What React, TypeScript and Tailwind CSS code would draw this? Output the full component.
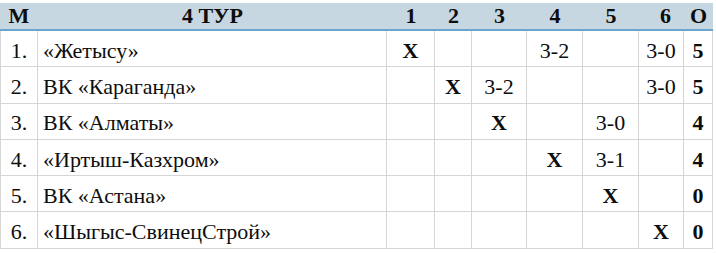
import React from "react";

const rows: { n: string; name: string; cells: string[]; o: string }[] = [
  { n: "1.", name: "«Жетысу»", cells: ["X", "", "", "3-2", "", "3-0"], o: "5" },
  { n: "2.", name: "ВК «Караганда»", cells: ["", "X", "3-2", "", "", "3-0"], o: "5" },
  { n: "3.", name: "ВК «Алматы»", cells: ["", "", "X", "", "3-0", ""], o: "4" },
  { n: "4.", name: "«Иртыш-Казхром»", cells: ["", "", "", "X", "3-1", ""], o: "4" },
  { n: "5.", name: "ВК «Астана»", cells: ["", "", "", "", "X", ""], o: "0" },
  { n: "6.", name: "«Шыгыс-СвинецСтрой»", cells: ["", "", "", "", "", "X"], o: "0" },
];

const grid = "grid grid-cols-[38px_349px_48px_37px_55px_56px_56px_45px_29px]";
const cell = "flex items-center justify-center pt-[4px] border-r border-b border-[#d6d6d6] h-[36.3px]";

export default function App() {
  return (
    <div className="bg-white w-[716px] h-[253px] pt-[3px] text-[#0d0d0d] font-['Liberation_Serif'] text-[22px] leading-none">
      <div className={grid + " bg-[#c6d7e1] h-[28px] border-b-2 border-[#6ea3cf] w-[713px] font-bold"}>
        <div className="flex items-center justify-center">М</div>
        <div className="flex items-center justify-center">4 ТУР</div>
        <div className="flex items-center justify-center">1</div>
        <div className="flex items-center justify-center">2</div>
        <div className="flex items-center justify-center">3</div>
        <div className="flex items-center justify-center">4</div>
        <div className="flex items-center justify-center">5</div>
        <div className="flex items-center justify-center pl-[8px]">6</div>
        <div className="flex items-center justify-center">О</div>
      </div>
      {rows.map((r) => (
        <div key={r.n} className={grid + " w-[713px]"}>
          <div className={cell + " border-l"}>{r.n}</div>
          <div className="flex items-center justify-start pt-[4px] pl-[5px] border-r border-b border-[#d6d6d6] h-[36.3px]">{r.name}</div>
          {r.cells.map((c, i) => (
            <div key={i} className={c === "X" ? cell + " font-bold" : cell}>
              {c}
            </div>
          ))}
          <div className={cell + " font-bold"}>{r.o}</div>
        </div>
      ))}
    </div>
  );
}
